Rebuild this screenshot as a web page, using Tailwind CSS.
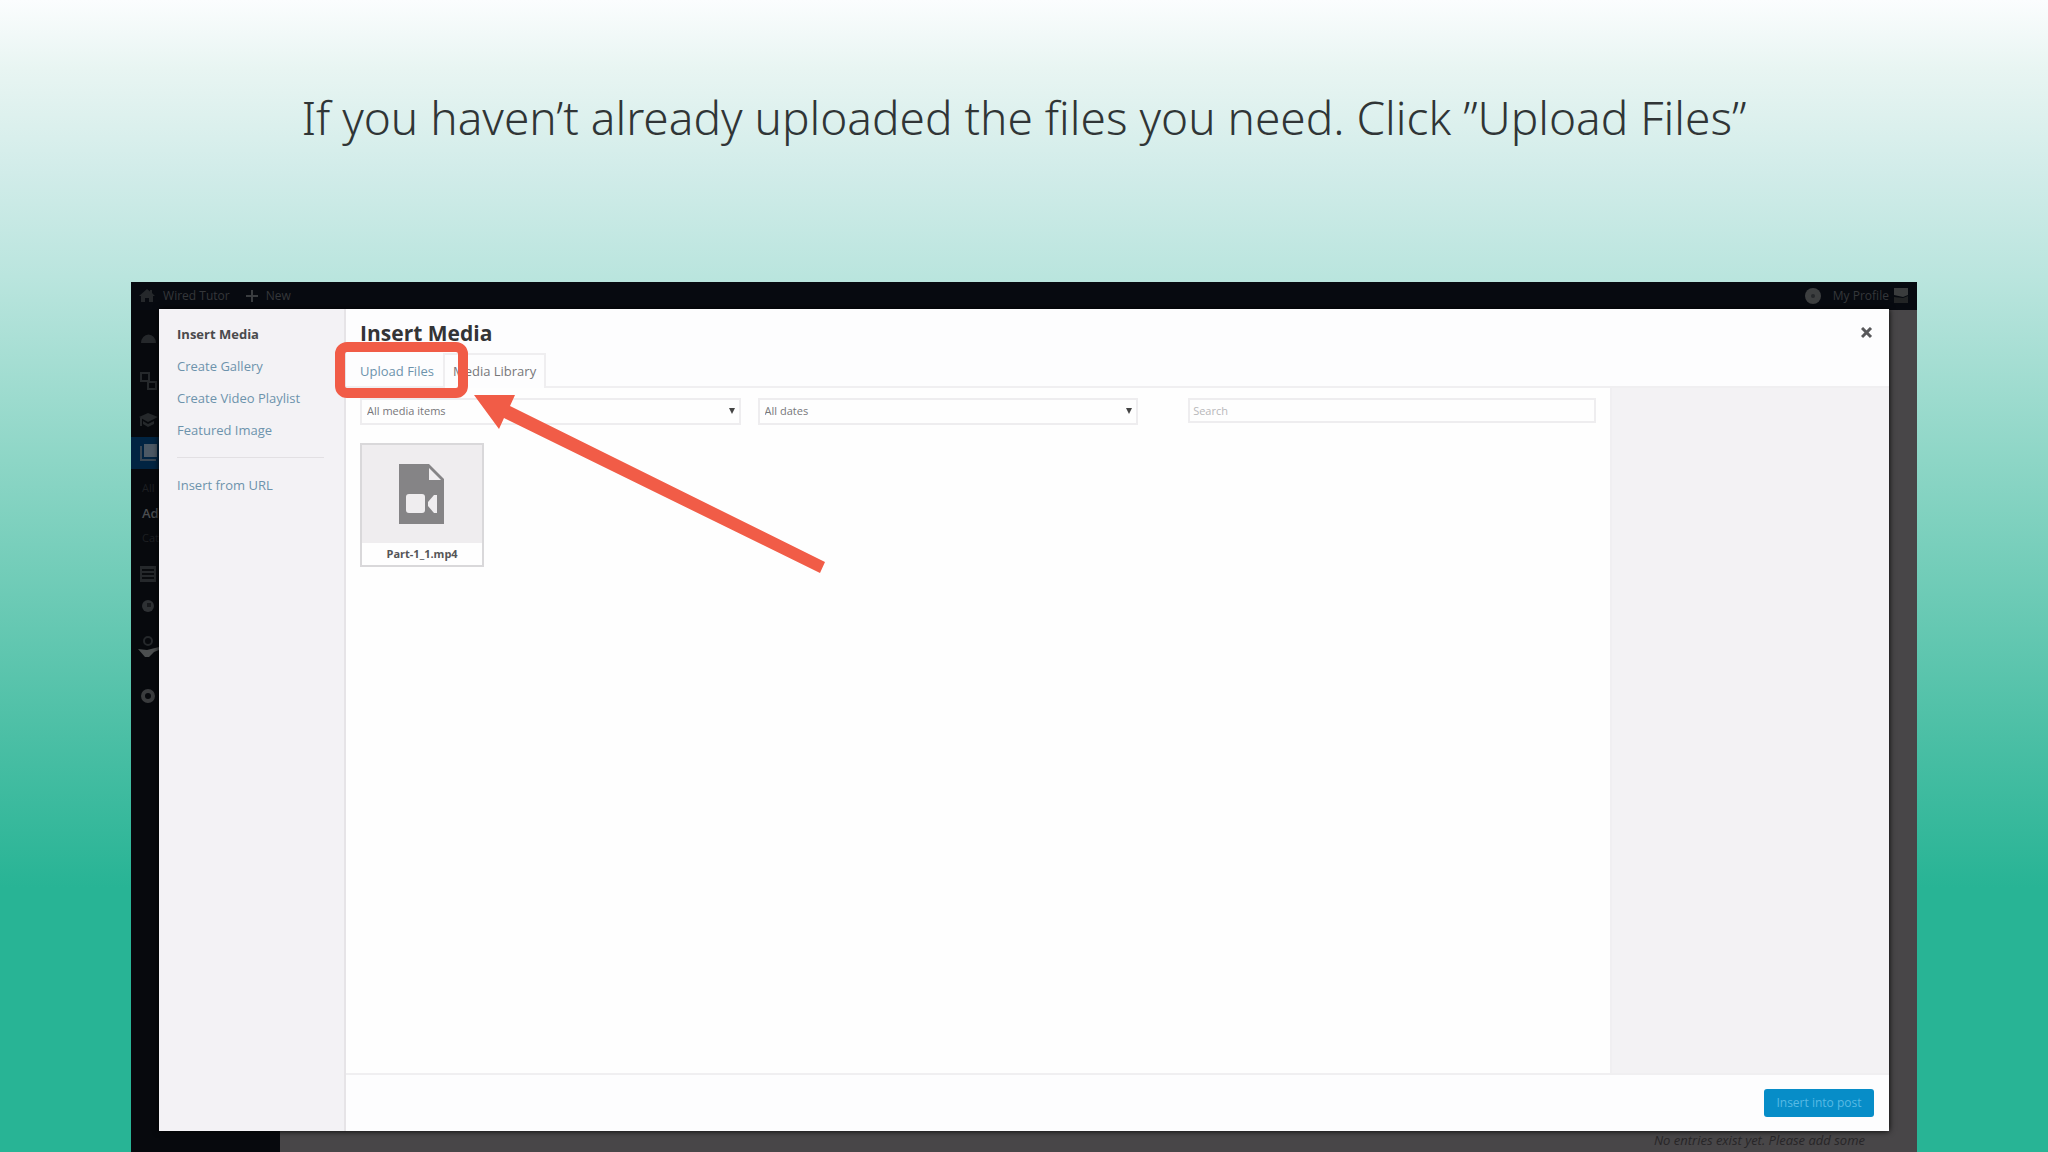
<!DOCTYPE html>
<html lang="en">

<head>
    <meta charset="UTF-8">
    <meta name="viewport" content="width=device-width, initial-scale=1.0">
    <title>Insert Media - Upload Files</title>
    <script src="https://cdn.jsdelivr.net/npm/@tailwindcss/browser@4"></script>
</head>

<body
    class="min-h-screen flex flex-col overflow-hidden font-['Open_Sans',sans-serif] text-[13px] bg-[linear-gradient(to_bottom,#fbfdfe_0%,#e8f5f2_6%,#d1ece9_15%,#bae5de_24%,#8dd6c6_40%,#4bbfa5_64%,#28b495_77%)]">
    <header class="h-[282px] px-8 pt-[83px] text-center">
        <h1 class="font-['Noto_Sans',sans-serif] font-light text-[46px] leading-[68px] text-[#303536] whitespace-nowrap">If you haven’t already uploaded the files you need. Click ”Upload Files”</h1>
    </header>

    <main class="flex-1 flex flex-col mx-[6.4%] relative bg-[#484648]">
        <!-- Admin bar -->
        <div class="h-7 flex items-center justify-between pl-2 pr-2 bg-[#070a10] text-[12px] text-[#35373a]">
            <div class="flex items-center">
                <svg class="w-4 h-4" viewBox="0 0 16 16" fill="#25282b"><path d="M8 1 0 8h2v6h4v-4h4v4h4V8h2l-3-3V2h-2v1.500z" /></svg>
                <a href="#" class="ml-2">Wired Tutor</a>
                <svg class="w-3 h-3 ml-4" viewBox="0 0 12 12" stroke="#3a3d40" stroke-width="2"><path d="M6 0v12M0 6h12" /></svg>
                <a href="#" class="ml-2">New</a>
            </div>
            <div class="flex items-center">
                <svg class="w-4 h-4" viewBox="0 0 16 16"><circle cx="8" cy="8" r="8" fill="#3d3f40" /><circle cx="8" cy="8" r="2" fill="#25282a" /></svg>
                <a href="#" class="ml-3">My Profile</a>
                <svg class="w-4 h-4 ml-1" viewBox="0 0 16 16"><path fill="#3a3c3d" d="M1 0h14v7l-5 2-9-2z" /><path fill="#222425" d="M1 9l9 1 5-2v7H1z" /></svg>
            </div>
        </div>

        <!-- Admin page behind the dialog -->
        <div class="flex-1 flex justify-between">
            <nav class="w-[149px] bg-[#07090d]">
                <svg class="w-7 h-[420px]" viewBox="0 0 28 420" fill="#25282b">
                    <path fill="#012442" d="M0 127h28v32H0z" />
                    <path d="M10 33a7 8 0 1 1 15 0z" />
                    <path fill="none" stroke="#25282b" stroke-width="2" d="M10 63h8v8h-8zM17 72h8v7h-8z" />
                    <path d="M8 107l9-4 10 4-10 5zM12 111l5 3 6-3v3l-6 3-5-3zM9 108h2v8H9z" />
                    <path fill="#4c5965" d="M13 134h13v13H13z" />
                    <path fill="none" stroke="#3a4753" stroke-width="2" d="M10 136v14h15" />
                    <text x="11" y="182" font-size="11" fill="#1d1f22">All</text>
                    <text x="11" y="208" font-size="13" font-weight="600" fill="#4b4d50">Add New</text>
                    <text x="11" y="232" font-size="11" fill="#1d1f22">Categories</text>
                    <path d="M9 256h16v16H9z" />
                    <path fill="#090b0e" d="M11 259h12v2H11zM11 263h12v2H11zM11 267h12v2H11z" />
                    <circle cx="17" cy="296" r="6" fill="#2e3134" />
                    <path fill="#17191c" d="M16 293h4v4h-4z" />
                    <circle cx="17" cy="331" r="4" fill="none" stroke="#25282b" stroke-width="2" />
                    <path fill="#4c4f50" d="M7 339l9 1 12-3v3l-5 2-5 5h-4z" />
                    <circle cx="17" cy="386" r="5" fill="none" stroke="#3a3c3e" stroke-width="4" />
                </svg>
            </nav>
            <p class="self-end pr-[52px] pb-1 text-[13px] leading-4 italic text-[#272527]">No entries exist yet. Please add some</p>
        </div>

        <!-- Insert media dialog -->
        <section class="absolute top-[27px] bottom-[21px] inset-x-7 flex bg-[#fdfdfe] shadow-[0_0_6px_#000]">
            <aside class="w-[187px] shrink-0 border-r-2 border-[#e6e4e7] bg-[#f3f2f5] pl-[18px] pr-5 pt-[9px]">
                <nav class="flex flex-col leading-8 text-[#6d93ac] whitespace-nowrap">
                    <a href="#" class="font-bold text-[#4a4a4c]">Insert Media</a>
                    <a href="#">Create Gallery</a>
                    <a href="#">Create Video Playlist</a>
                    <a href="#">Featured Image</a>
                    <hr class="my-[11px] border-[#e2e0e3]">
                    <a href="#">Insert from URL</a>
                </nav>
            </aside>

            <div class="flex-1 flex flex-col min-w-0">
                <div class="h-[79px] flex flex-col justify-between border-b-2 border-[#f0eff1] pl-[14px] pr-4">
                    <div class="flex justify-between pt-2">
                        <h2 class="text-[21px] leading-8 font-bold text-[#343436]">Insert Media</h2>
                        <button type="button" aria-label="Close" class="w-3 h-8 flex items-center">
                            <svg class="w-3 h-3" viewBox="0 0 12 12" stroke="#58585a" stroke-width="3"><path d="M1 1l9 9M10 1l-9 9" /></svg>
                        </button>
                    </div>
                    <div class="flex -mb-[2px]">
                        <button type="button" class="w-[83px] h-[35px] pt-[2px] text-left text-[#6d93ac]">Upload Files</button>
                        <button type="button" class="w-[103px] h-[35px] border-2 border-b-0 border-[#efeef0] bg-[#fdfdfe] text-[#77777a]">Media Library</button>
                    </div>
                </div>

                <div class="flex-1 flex">
                    <div class="flex-1 pl-[14px] pr-[14px] pt-[10px] bg-[#fefefe]">
                        <div class="flex text-[11px] text-[#77777a]">
                            <div class="flex-1 relative">
                                <select aria-label="Media type" class="w-full h-[27px] pl-[5px] appearance-none border-2 border-[#eeedef]">
                                    <option>All media items</option>
                                </select>
                                <svg class="absolute right-[6px] top-[10px] w-[6px] h-[6px]" viewBox="0 0 6 6"><path fill="#444" d="M0 0h6L3 6z" /></svg>
                            </div>
                            <div class="flex-1 relative ml-[17px]">
                                <select aria-label="Date" class="w-full h-[27px] pl-[5px] appearance-none border-2 border-[#eeedef]">
                                    <option>All dates</option>
                                </select>
                                <svg class="absolute right-[6px] top-[10px] w-[6px] h-[6px]" viewBox="0 0 6 6"><path fill="#444" d="M0 0h6L3 6z" /></svg>
                            </div>
                            <input type="search" aria-label="Search" placeholder="Search" class="w-[33%] h-[25px] ml-[50px] px-[3px] border-2 border-[#eeedef] placeholder:text-[#b8b8ba]">
                        </div>

                        <figure class="w-[124px] mt-[18px] border-2 border-[#d9d8da] bg-[#efedef]">
                            <div class="h-[98px] flex items-center justify-center">
                                <svg class="w-[46px] h-[60px]" viewBox="0 0 46 60">
                                    <path fill="#858486" d="M0 0h30l15 15v45H0z" />
                                    <path fill="#efedef" d="M30 4v12h12z" />
                                    <rect x="7" y="30" width="19" height="19" rx="3" fill="#efedef" />
                                    <path fill="#efedef" d="M29 38l6-7h3v18h-3l-6-7z" />
                                </svg>
                            </div>
                            <figcaption class="bg-[#fefefe] text-center text-[11px] leading-[22px] font-bold text-[#555557]">Part-1_1.mp4</figcaption>
                        </figure>
                    </div>
                    <aside class="w-[279px] bg-[#f3f2f4] border-l-2 border-[#f0eff1]"></aside>
                </div>

                <footer class="h-[58px] flex items-center justify-end border-t-2 border-[#f0eff1] pr-[15px]">
                    <button type="button" class="w-[110px] h-7 rounded-[3px] bg-[#078dc8] text-[12px] text-[#58bae4]">Insert into post</button>
                </footer>
            </div>
        </section>

        <!-- Callout box and arrow over the Upload Files tab -->
        <div class="absolute left-[204px] top-[60px] w-[133px] h-[56px] border-[10px] border-[#f15c47] rounded-[12px]"></div>
        <svg class="absolute left-[343px] top-[113px] w-[352px] h-[180px]" viewBox="0 0 352 180">
            <path fill="#f15c47" d="M0 0h41l-5 11 315 156-5 11L30 23l-5 11z" />
        </svg>
    </main>
</body>

</html>
